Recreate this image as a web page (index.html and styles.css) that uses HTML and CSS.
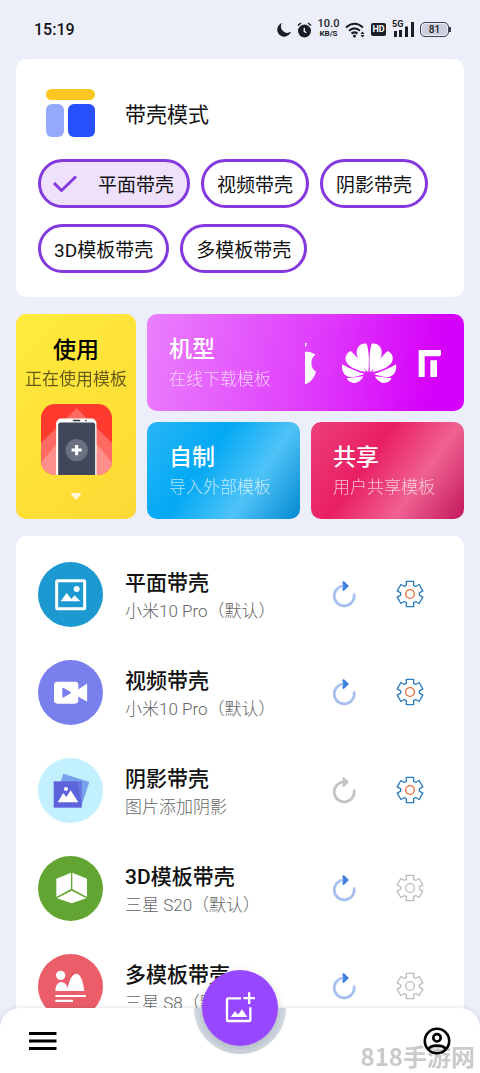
FILE: index.html
```html
<!DOCTYPE html>
<html lang="zh-CN">
<head>
<meta charset="utf-8">
<meta name="viewport" content="width=device-width, initial-scale=1">
<title>带壳模式</title>
<link rel="stylesheet" href="styles.css">
</head>
<body>
<svg class="defs" aria-hidden="true">
  <symbol id="refresh" viewBox="67 64 74 84">
    <path class="refresh-ring" d="M133 108A30 30 0 1 1 99 82"/>
    <path class="refresh-head" d="M101 71L113 82L101 93L104 82Z"/>
  </symbol>
  <symbol id="gear" viewBox="-42 -42 84 84">
    <path class="gear-edge" d="M-11-26V-38H11V-26L17-22.500L27.400-28.500L38.400-9.500L28-3.500V3.500L38.400 9.500L27.400 28.500L17 22.500L11 26V38H-11V26L-17 22.500L-27.400 28.500L-38.400 9.500L-28 3.500V-3.500L-38.400-9.500L-27.400-28.500L-17-22.500Z"/>
    <circle class="gear-hub" r="13"/>
  </symbol>
</svg>

<header class="status">
  <span class="clock">15:19</span>
  <div class="status-icons">
    <svg width="14" height="15" viewBox="0 0 14 15"><path fill="#1b1d26" d="M5 1A7 7 0 1 0 14 9.500A6.300 6.300 0 0 1 5 1Z"/></svg>
    <svg width="15" height="16" viewBox="0 0 15 16"><circle cx="7.500" cy="9" r="6.500" fill="#1b1d26"/><path d="M1 3.500L4 1M14 3.500L11 1" stroke="#1b1d26" stroke-width="1.600"/><path d="M7.300 6V9.300L9.300 10.800" fill="none" stroke="#eceef9" stroke-width="1.400"/></svg>
    <span class="speed"><b>10.0</b><span>KB/S</span></span>
    <svg width="20" height="16" viewBox="0 0 20 16"><g fill="none" stroke="#1b1d26" stroke-width="2"><path d="M1 5.500Q9.500-2 18 5.500"/><path d="M4 8.700Q9.500 4 15 8.700"/><path d="M6.500 11.600Q9.500 9.200 12.500 11.600"/></g><circle cx="9.500" cy="14" r="1.500" fill="#1b1d26"/><path fill="#1b1d26" d="M15.500 12L17.500 9.500L19.500 12ZM15.500 13L17.500 15.500L19.500 13Z"/></svg>
    <span class="hd">HD</span>
    <span class="signal"><span>5G</span><svg width="22" height="15" viewBox="0 0 22 15"><path stroke="#1b1d26" stroke-width="3" d="M3.500 9V15M8.500 8V15M14.500 4.500V15M20.500 0V15"/></svg></span>
    <span class="battery">81</span>
  </div>
</header>

<main class="content">
  <section class="card modes">
    <div class="modes-head">
      <svg width="50" height="48" viewBox="0 0 50 48"><rect width="49" height="11" rx="5.500" fill="#fbc720"/><rect y="15" width="18" height="33" rx="6" fill="#94a9fc"/><rect x="22" y="15" width="27" height="33" rx="6" fill="#2750fd"/></svg>
      <h1>带壳模式</h1>
    </div>
    <div class="chips">
      <label class="chip"><input type="radio" name="mode" checked><svg class="tick" width="26" height="20" viewBox="0 0 26 20"><path d="M2 9L9.500 16.500L24 2.500" fill="none" stroke="#8339dd" stroke-width="3"/></svg><span>平面带壳</span></label>
      <label class="chip"><input type="radio" name="mode"><span>视频带壳</span></label>
      <label class="chip"><input type="radio" name="mode"><span>阴影带壳</span></label>
      <label class="chip"><input type="radio" name="mode"><span>3D模板带壳</span></label>
      <label class="chip"><input type="radio" name="mode"><span>多模板带壳</span></label>
    </div>
  </section>

  <section class="tiles">
    <button class="tile tile-use">
      <span class="tile-title">使用</span>
      <span class="tile-sub">正在使用模板</span>
      <svg class="thumb" width="71" height="71" viewBox="0 0 211 211">
        <defs><clipPath id="thumb-shape"><rect width="211" height="211" rx="42"/></clipPath></defs>
        <g clip-path="url(#thumb-shape)">
          <rect width="211" height="211" fill="#ff3b30"/>
          <path fill="#ff6a62" d="M106 13L211 116V211H0V116Z"/>
          <path fill="#ff8f8a" d="M106 48L211 174V211H0V174Z"/>
          <rect x="45" y="43" width="120" height="190" rx="15" fill="#fff"/>
          <rect x="51" y="55" width="110" height="170" rx="8" fill="#41475b"/>
          <path stroke="#333" stroke-width="4" stroke-linecap="round" d="M97 49H115M133 49H134"/>
          <circle cx="106" cy="137" r="33" fill="#6a7080"/>
          <path stroke="#fff" stroke-width="9" d="M106 122V152M91 137H121"/>
        </g>
      </svg>
      <svg class="arrow" width="10" height="7" viewBox="0 0 10 7"><path fill="#fff8d0" stroke="#fff8d0" stroke-width="2" stroke-linejoin="round" d="M1 1H9L5 5.500Z"/></svg>
    </button>
    <button class="tile tile-model">
      <span class="tile-text"><span class="tile-title">机型</span><span class="tile-sub">在线下载模板</span></span>
      <svg class="brands" width="137" height="44" viewBox="198 120 411 132">
        <defs><g id="petals"><path d="M388 214C391 180 390 150 383 128C365 125 352 138 353 157C355 182 372 200 388 214Z"/><path d="M381 213C372 190 352 165 335 150C320 157 315 174 324 186C336 202 360 210 381 213Z"/><path d="M377 219C355 213 330 202 310 190C307 208 314 224 331 228C347 230 362 224 377 219Z"/><path d="M373 226L323 232C329 244 341 248 352 245C363 242 369 234 373 226Z"/></g></defs>
        <g fill="#fff"><path d="M198 153C210 150 222 155 229 162C212 172 214 203 231 212C226 230 212 248 198 249ZM198 126H203L202 135L198 138Z"/><use href="#petals"/><use href="#petals" transform="matrix(-1 0 0 1 781 0)"/><path d="M539 147H606V162L602 166H557V228H539ZM574 178H594V228H574Z"/></g>
      </svg>
    </button>
    <button class="tile tile-make"><span class="tile-text"><span class="tile-title">自制</span><span class="tile-sub">导入外部模板</span></span></button>
    <button class="tile tile-share"><span class="tile-text"><span class="tile-title">共享</span><span class="tile-sub">用户共享模板</span></span></button>
  </section>

  <ul class="card list">
    <li class="row">
      <svg class="avatar" viewBox="0 0 195 195"><circle cx="97.500" cy="97.500" r="97.500" fill="#1c99d0"/><rect x="56" y="56" width="84" height="84" rx="3" fill="none" stroke="#fff" stroke-width="9"/><circle cx="116" cy="81" r="9" fill="#fff"/><path fill="#fff" d="M68 118L86 93L100 111L110 100L127 118Z"/></svg>
      <div class="row-text"><h2>平面带壳</h2><p>小米10 Pro（默认）</p></div>
      <button class="icon-btn" aria-label="重置"><svg class="refresh"><use href="#refresh"/></svg></button>
      <button class="icon-btn" aria-label="设置"><svg class="gear"><use href="#gear"/></svg></button>
    </li>
    <li class="row">
      <svg class="avatar" viewBox="0 0 195 195"><circle cx="97.500" cy="97.500" r="97.500" fill="#7a7fee"/><rect x="48" y="65" width="73" height="66" rx="10" fill="#fff"/><path fill="#fff" stroke="#fff" stroke-width="3" stroke-linejoin="round" d="M119 91L146 73V123L119 107Z"/><path fill="#7a7fee" stroke="#7a7fee" stroke-width="4" stroke-linejoin="round" d="M75 85L97 98L75 111Z"/></svg>
      <div class="row-text"><h2>视频带壳</h2><p>小米10 Pro（默认）</p></div>
      <button class="icon-btn" aria-label="重置"><svg class="refresh"><use href="#refresh"/></svg></button>
      <button class="icon-btn" aria-label="设置"><svg class="gear"><use href="#gear"/></svg></button>
    </li>
    <li class="row">
      <svg class="avatar" viewBox="0 0 195 195"><circle cx="97.500" cy="97.500" r="97.500" fill="#c2f0fe"/><path fill="#769fec" d="M76 47L154 72L130 145L52 120Z"/><rect x="47" y="70" width="84" height="79" fill="#5d63da"/><path fill="#769fec" opacity=".35" d="M117 70H131V140Z"/><circle cx="84" cy="93" r="6" fill="#fff"/><path fill="#fff" d="M59 133L76 105L85 117L98 97L121 133Z"/></svg>
      <div class="row-text"><h2>阴影带壳</h2><p>图片添加阴影</p></div>
      <button class="icon-btn" aria-label="重置" disabled><svg class="refresh"><use href="#refresh"/></svg></button>
      <button class="icon-btn" aria-label="设置"><svg class="gear"><use href="#gear"/></svg></button>
    </li>
    <li class="row">
      <svg class="avatar" viewBox="0 0 195 195"><circle cx="97.500" cy="97.500" r="97.500" fill="#62a532"/><path fill="#fff" d="M99 50V99L55 123V68ZM103 50L147 68V123L103 99ZM101 104L145 127L101 142L57 127Z"/></svg>
      <div class="row-text"><h2>3D模板带壳</h2><p>三星 S20（默认）</p></div>
      <button class="icon-btn" aria-label="重置"><svg class="refresh"><use href="#refresh"/></svg></button>
      <button class="icon-btn" aria-label="设置" disabled><svg class="gear"><use href="#gear"/></svg></button>
    </li>
    <li class="row">
      <svg class="avatar" viewBox="0 0 195 195"><circle cx="97.500" cy="97.500" r="97.500" fill="#ea5d69"/><circle cx="68" cy="64" r="14" fill="#fff"/><path fill="#fff" d="M52 111C53 93 60 85 70 84C80 85 86 92 89 101C94 82 100 60 115 59C131 60 136 90 139 111ZM52 123H144V129H52ZM52 137H105V144H52Z"/></svg>
      <div class="row-text"><h2>多模板带壳</h2><p>三星 S8（默认）</p></div>
      <button class="icon-btn" aria-label="重置"><svg class="refresh"><use href="#refresh"/></svg></button>
      <button class="icon-btn" aria-label="设置" disabled><svg class="gear"><use href="#gear"/></svg></button>
    </li>
  </ul>
</main>

<nav class="bar">
  <span class="watermark">818手游网</span>
  <button class="bar-btn" aria-label="菜单"><svg width="28" height="20" viewBox="0 0 28 20"><path stroke="#000" stroke-width="3" d="M0 2.500H27.500M0 10H27.500M0 17.500H27.500"/></svg></button>
  <button class="bar-btn" aria-label="账户"><svg width="28" height="28" viewBox="0 0 28 28" fill="none" stroke="#000" stroke-width="2.600"><circle cx="14" cy="14" r="12.200"/><circle cx="14" cy="10.800" r="3.700"/><path d="M5.500 21.500C9 17.600 19 17.600 22.500 21.500"/></svg></button>
  <div class="cradle"></div>
  <button class="fab" aria-label="添加图片"><svg width="30" height="32" viewBox="0 0 90 96"><g fill="none" stroke="#fff" stroke-width="7"><path d="M48 19H10Q6 19 6 23V83Q6 87 10 87H72Q76 87 76 83V46"/><path d="M55 18.500H90M72.500 1V36"/></g><path fill="#fff" d="M17 75L30 57L39 68L51 52L67 75Z"/></svg></button>
</nav>
</body>
</html>
```
FILE: styles.css
```css
* { box-sizing: border-box; }
body {
  margin: 0;
  height: 100vh;
  display: flex;
  flex-direction: column;
  overflow: hidden;
  background: #eceef9;
  color: #111;
  font-family: Roboto, "Noto Sans CJK SC", sans-serif;
}
h1, h2, p, ul { margin: 0; padding: 0; }
button { border: 0; padding: 0; background: none; font: inherit; color: inherit; cursor: pointer; }
svg { display: block; flex: none; }
.defs { position: absolute; width: 0; height: 0; }

.status {
  flex: none;
  height: 59px;
  padding: 0 31px 0 34px;
  display: flex;
  align-items: center;
  justify-content: space-between;
}
.clock { font-size: 16px; font-weight: 500; }
.status-icons { display: flex; align-items: center; gap: 6px; color: #1b1d26; }
.speed { display: flex; flex-direction: column; align-items: center; width: 21px; font-size: 8px; line-height: 10px; font-weight: 700; }
.speed b { font-size: 11px; line-height: 13px; font-weight: 500; margin-top: -4px; }
.speed span { margin-top: -1px; }
.hd {
  width: 15px;
  height: 13px;
  border-radius: 2px;
  background: #1b1d26;
  color: #fff;
  font-size: 9px;
  line-height: 13px;
  font-weight: 700;
  text-align: center;
}
.signal { position: relative; }
.signal span { position: absolute; left: 0; top: -2px; font-size: 9px; line-height: 9px; font-weight: 700; }
.battery {
  position: relative;
  width: 29px;
  height: 15px;
  border: 1px solid #3c3f50;
  border-radius: 5px;
  background: #cdd0dc;
  box-shadow: inset 0 0 0 1px #eceef9;
  font-size: 10px;
  line-height: 13px;
  font-weight: 500;
  text-align: center;
}
.battery::after {
  content: "";
  position: absolute;
  right: -3px;
  top: 4px;
  width: 2px;
  height: 5px;
  background: #3c3f50;
}

.content {
  flex: 1;
  min-height: 0;
  overflow-y: auto;
  scrollbar-width: none;
  padding: 0 16px;
}
.card { background: #fff; border-radius: 10px; }
.modes { padding: 30px 22px 24px; }
.modes-head { display: flex; align-items: center; gap: 29px; padding-left: 8px; }
.modes-head h1 { font-size: 21px; line-height: 28px; font-weight: 400; padding-top: 4px; }
.chips { display: flex; flex-wrap: wrap; gap: 16px 11px; margin-top: 22px; }
.chip {
  position: relative;
  height: 49px;
  display: flex;
  align-items: center;
  padding: 0 13px;
  border: 3px solid #8339dd;
  border-radius: 25px;
  font-size: 19px;
  line-height: 26px;
  cursor: pointer;
}
.chip span { padding-top: 4px; }
.chip:has(input:checked) { background: #efe1fb; }
.chip input { position: absolute; inset: 0; margin: 0; opacity: 0; }
.tick { margin: 0 20px 0 -2px; }

.tiles {
  display: grid;
  grid-template-columns: 120px 1fr 1fr;
  grid-auto-rows: 97px;
  gap: 11px;
  margin: 17px 0;
}
.tile {
  border-radius: 10px;
  padding: 0 22px;
  display: flex;
  align-items: center;
  color: #fff;
  text-align: left;
  white-space: nowrap;
}
.tile-text { display: flex; flex-direction: column; padding-top: 3px; }
.tile-title { font-size: 23px; line-height: 30px; font-weight: 500; }
.tile-sub { font-size: 17px; line-height: 28px; font-weight: 300; opacity: .7; }
.tile-use {
  grid-row: span 2;
  flex-direction: column;
  padding: 22px 0 0;
  color: #000;
  background: linear-gradient(135deg, #ffeb3b, #fdd835);
}
.tile-use .tile-sub { font-weight: 400; opacity: .6; line-height: 26px; }
.thumb { margin-top: 12px; }
.arrow { margin-top: 18px; }
.tile-model {
  grid-column: span 2;
  justify-content: space-between;
  background: linear-gradient(100deg, #ea80fc, #e040fb 50%, #d500f9 90%);
}
.tile-make { background: linear-gradient(125deg, #29b6f6, #03a9f4 38%, #4fc3f7 68%, #0288d1); }
.tile-share { background: linear-gradient(125deg, #ec407a, #e91e63 38%, #f06292 68%, #c2185b); }

.list { list-style: none; padding: 9px 22px; }
.row { display: flex; align-items: center; height: 98px; }
.avatar { width: 65px; height: 65px; margin-right: 22px; }
.row-text { flex: 1; min-width: 0; padding-top: 5px; white-space: nowrap; }
.row-text h2 { font-size: 21px; line-height: 28px; font-weight: 500; }
.row-text p { font-size: 17px; line-height: 28px; font-weight: 300; color: #666; }
.icon-btn { width: 65px; height: 65px; display: grid; place-items: center; }
.refresh { width: 25px; height: 28px; }
.gear { width: 28px; height: 28px; }
.refresh-ring { fill: none; stroke: #a5bff0; stroke-width: 8px; stroke-linecap: round; }
.refresh-head { fill: #3f7fe2; stroke: #3f7fe2; stroke-width: 7px; stroke-linejoin: round; }
.gear-edge { fill: none; stroke: #2b7dbd; stroke-width: 4px; stroke-linejoin: round; }
.gear-hub { fill: none; stroke: #e56b35; stroke-width: 4px; }
.icon-btn:disabled .refresh { filter: brightness(0) opacity(.24); }
.icon-btn:disabled .gear { filter: brightness(0) opacity(.26); }

.bar {
  position: fixed;
  left: 0;
  right: 0;
  bottom: 0;
  height: 65px;
  padding: 0 29px;
  display: flex;
  align-items: center;
  justify-content: space-between;
  background: #fff;
  border-radius: 20px 20px 0 0;
  box-shadow: 0 0 4px rgba(40, 50, 90, .18);
}
.bar-btn { position: relative; }
.cradle {
  position: absolute;
  left: 50%;
  top: 0;
  width: 92px;
  height: 46px;
  margin-left: -46px;
  border-radius: 0 0 46px 46px;
  background: #d3d9e2;
}
.fab {
  position: absolute;
  left: 50%;
  top: -38px;
  width: 76px;
  height: 76px;
  margin-left: -38px;
  border-radius: 50%;
  display: grid;
  place-items: center;
  background: #9747ff;
  box-shadow: 0 3px 8px rgba(60, 60, 80, .22);
}
.watermark {
  position: absolute;
  right: 5px;
  bottom: 1px;
  font-family: "Noto Sans CJK SC", sans-serif;
  font-size: 24px;
  line-height: 32px;
  font-weight: 700;
  color: #cacaca;
  pointer-events: none;
}
```
